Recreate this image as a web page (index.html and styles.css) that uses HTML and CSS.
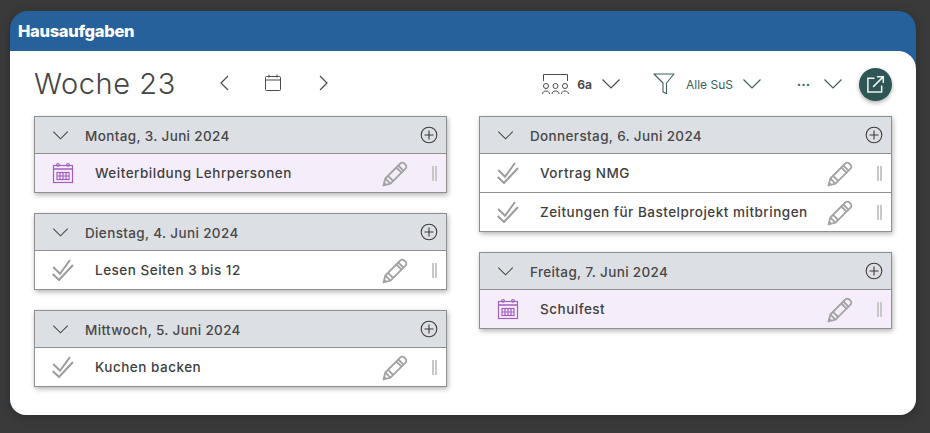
FILE: index.html
```html
<!DOCTYPE html>
<html lang="de">
<head>
<meta charset="utf-8">
<title>Hausaufgaben</title>
<link rel="stylesheet" href="styles.css">
</head>
<body>
<svg class="defs" width="0" height="0" aria-hidden="true">
  <symbol id="chev" viewBox="0 0 20 12"><path d="M1.5 1.5 10 10l8.500-8.500" fill="none" stroke="currentColor" stroke-width="1.200"/></symbol>
  <symbol id="plus" viewBox="0 0 18 18"><circle cx="9" cy="9" r="7.800" fill="none" stroke="currentColor" stroke-width="1.100"/><path d="M9 4.500v9M4.500 9h9" fill="none" stroke="currentColor" stroke-width="1.100"/></symbol>
  <symbol id="pencil" viewBox="0 0 26 26"><g fill="none" stroke="#a3a3a3" stroke-width="1.800" stroke-linejoin="round"><path d="M1.500 24.500l1.800-7L18.300 2.500a2.800 2.800 0 0 1 4 0l1.200 1.200a2.800 2.800 0 0 1 0 4L8.500 22.700z"/><path d="M3.300 17.500l5.200 5.200M6 14.800l5.200 5.200M16.300 4.500l5.200 5.200M14.300 6.500l5.200 5.200"/></g><path d="M1.500 24.500l.9-3.700 2.800 2.800z" fill="#a3a3a3"/></symbol>
  <symbol id="check" viewBox="0 0 24 22"><g fill="none" stroke="#9c9c9c" stroke-width="2"><path d="M.7 15 7 21 21 6"/><path d="M1.200 8l6.800 6.800L18 1"/></g></symbol>
  <symbol id="cal" viewBox="0 0 22 22"><g fill="none" stroke="#a25fc1" stroke-width="1.200"><rect x="1.500" y="3.500" width="19" height="17"/><path d="M1.500 7h19" stroke-width="1.500"/><rect x="5" y="10.500" width="12" height="7"/><path d="M8 10.500v7M11 10.500v7M14 10.500v7M5 14h12"/><circle cx="6" cy="2.800" r="1.300"/><circle cx="16" cy="2.800" r="1.300"/></g></symbol>
</svg>
<main class="panel">
  <header class="title-bar"><h1 class="title">Hausaufgaben</h1></header>
  <div class="content">
    <div class="toolbar">
      <div class="week-nav">
        <h2 class="week">Woche 23</h2>
        <svg class="arrow" viewBox="0 0 12 18" aria-hidden="true"><path d="M10 2 3 9l7 7" fill="none" stroke="#4a4a4a" stroke-width="1.200"/></svg>
        <svg class="today" viewBox="0 0 16 18" aria-hidden="true"><g fill="none" stroke="#4a4a4a" stroke-width="1"><rect x=".5" y="2.500" width="15" height="14" rx="1"/><path d="M.5 6h15" /><path d="M4 .5v3M12 .5v3"/></g></svg>
        <svg class="arrow" viewBox="0 0 12 18" aria-hidden="true"><path d="m2 2 7 7-7 7" fill="none" stroke="#4a4a4a" stroke-width="1.200"/></svg>
      </div>
      <div class="tools">
        <svg class="class-icon" viewBox="0 0 27 22" aria-hidden="true"><g fill="none" stroke="#4a4a4a" stroke-width="1"><path d="M1.500 8V1.500h24V8"/><circle cx="4" cy="13" r="2.500"/><circle cx="13.500" cy="13" r="2.500"/><circle cx="23" cy="13" r="2.500"/><path d="M.5 21c0-4 7-4 7 0M10 21c0-4 7-4 7 0M19.500 21c0-4 7-4 7 0"/></g></svg>
        <span class="class-name">6a</span>
        <svg class="tool-chev dark"><use href="#chev"/></svg>
        <svg class="filter" viewBox="0 0 22 22" aria-hidden="true"><path d="M1 1h20l-7.500 9v10.500l-3.500-1.500v-9z" fill="none" stroke="#3d5f5c" stroke-width="1.100" stroke-linejoin="round"/></svg>
        <span class="filter-name">Alle SuS</span>
        <svg class="tool-chev teal"><use href="#chev"/></svg>
        <span class="dots">&#8226;&#8226;&#8226;</span>
        <svg class="tool-chev teal more"><use href="#chev"/></svg>
        <button class="open" type="button" aria-label="Öffnen">
          <svg viewBox="0 0 20 20" aria-hidden="true"><g fill="none" stroke="#f2f2f2" stroke-width="1.600"><path d="M9 3.500H2v14.500h14.500V11"/><path d="M7.500 12.500 18 2M11.500 1.800h6.700v6.700"/></g></svg>
        </button>
      </div>
    </div>
    <div class="columns">
      <div class="column">
        <section class="day">
          <div class="day-head"><svg class="head-chev"><use href="#chev"/></svg><span class="day-name">Montag, 3. Juni 2024</span><svg class="plus"><use href="#plus"/></svg></div>
          <div class="item event"><svg class="item-icon cal"><use href="#cal"/></svg><span class="item-text">Weiterbildung Lehrpersonen</span><svg class="pencil"><use href="#pencil"/></svg><span class="grip"></span></div>
        </section>
        <section class="day">
          <div class="day-head"><svg class="head-chev"><use href="#chev"/></svg><span class="day-name">Dienstag, 4. Juni 2024</span><svg class="plus"><use href="#plus"/></svg></div>
          <div class="item"><svg class="item-icon"><use href="#check"/></svg><span class="item-text">Lesen Seiten 3 bis 12</span><svg class="pencil"><use href="#pencil"/></svg><span class="grip"></span></div>
        </section>
        <section class="day">
          <div class="day-head"><svg class="head-chev"><use href="#chev"/></svg><span class="day-name">Mittwoch, 5. Juni 2024</span><svg class="plus"><use href="#plus"/></svg></div>
          <div class="item"><svg class="item-icon"><use href="#check"/></svg><span class="item-text">Kuchen backen</span><svg class="pencil"><use href="#pencil"/></svg><span class="grip"></span></div>
        </section>
      </div>
      <div class="column">
        <section class="day">
          <div class="day-head"><svg class="head-chev"><use href="#chev"/></svg><span class="day-name">Donnerstag, 6. Juni 2024</span><svg class="plus"><use href="#plus"/></svg></div>
          <div class="item"><svg class="item-icon"><use href="#check"/></svg><span class="item-text">Vortrag NMG</span><svg class="pencil"><use href="#pencil"/></svg><span class="grip"></span></div>
          <div class="item"><svg class="item-icon"><use href="#check"/></svg><span class="item-text">Zeitungen für Bastelprojekt mitbringen</span><svg class="pencil"><use href="#pencil"/></svg><span class="grip"></span></div>
        </section>
        <section class="day">
          <div class="day-head"><svg class="head-chev"><use href="#chev"/></svg><span class="day-name">Freitag, 7. Juni 2024</span><svg class="plus"><use href="#plus"/></svg></div>
          <div class="item event"><svg class="item-icon cal"><use href="#cal"/></svg><span class="item-text">Schulfest</span><svg class="pencil"><use href="#pencil"/></svg><span class="grip"></span></div>
        </section>
      </div>
    </div>
  </div>
</main>
</body>
</html>
```
FILE: styles.css
```css
* { box-sizing: border-box; }
html, body { margin: 0; height: 100%; }
body {
  background: #3a3a3a;
  padding: 11px 14px 18px 10px;
  font-family: Inter, "Liberation Sans", sans-serif;
  overflow: hidden;
}
.defs { position: absolute; }
.panel {
  height: 404px;
  background: #26619c;
  border-radius: 18px 18px 16px 16px;
  box-shadow: 0 2px 10px rgba(0,0,0,.25);
  display: flex;
  flex-direction: column;
  overflow: hidden;
}
.title-bar { height: 40px; flex: none; display: flex; align-items: center; padding-left: 8px; }
.title { margin: 0; font-size: 16.500px; font-weight: 800; color: #fff; letter-spacing: -.3px; }
.content {
  flex: 1;
  background: #fff;
  border-radius: 0 18px 0 0;
  padding: 0 24px;
}
.toolbar { height: 65px; display: flex; justify-content: space-between; align-items: flex-start; }
.week-nav { display: flex; align-items: center; height: 65px; padding-bottom: 1px; }
.week { margin: 0; font-size: 29px; font-weight: 300; color: #444; width: 142px; letter-spacing: .55px; line-height: 1; }
.arrow { width: 12px; height: 18px; }
.today { width: 16px; height: 18px; margin: 0 37px 0 35px; }
.week-nav .arrow:nth-of-type(1) { margin-left: 42px; }
.tools { display: flex; align-items: center; height: 65px; padding-top: 1px; }
.class-icon { width: 27px; height: 22px; }
.class-name { font-size: 12px; font-weight: 700; color: #4a4a4a; margin-left: 8px; }
.tool-chev { width: 20px; height: 12px; }
.tool-chev.dark { color: #4a4a4a; margin-left: 9px; }
.tool-chev.teal { color: #3d5f5c; }
.filter { width: 22px; height: 22px; margin-left: 32px; }
.filter-name { font-size: 12px; color: #3d5f5c; margin-left: 11px; margin-right: 9px; }
.dots { font-size: 7px; color: #3d5f5c; margin-left: 35px; letter-spacing: .5px; width: 14px; }
.more { margin-left: 12px; }
.open {
  width: 33px; height: 33px; margin-left: 16px; padding: 0;
  border: 0; border-radius: 50%;
  background: #2d5654;
  box-shadow: 0 2px 4px rgba(0,0,0,.3);
  display: flex; align-items: center; justify-content: center;
}
.open svg { width: 19px; height: 19px; }
.columns { display: grid; grid-template-columns: 413px 413px; column-gap: 32px; }
.column { display: flex; flex-direction: column; gap: 20px; }
.day {
  border: 1px solid #8f8f8f;
  background: #fff;
  box-shadow: 1px 2px 5px rgba(0,0,0,.3);
}
.day-head {
  height: 36px;
  background: #dcdfe3;
  display: flex; align-items: center;
  padding: 0 8px 0 17px;
  color: #444;
}
.head-chev { width: 17px; height: 11px; }
.day-name { font-size: 13.500px; font-weight: 500; color: #484848; margin-left: 16px; padding-top: 2px; flex: 1; letter-spacing: .36px; }
.plus { width: 18px; height: 18px; color: #3c3c3c; }
.item {
  height: 39px;
  border-top: 1px solid #8f8f8f;
  display: flex; align-items: center;
  padding: 0 9px 0 17px;
}
.event { background: #f5eefa; }
.item-icon { width: 24px; height: 22px; flex: none; }
.cal { width: 22px; height: 22px; margin-right: 2px; }
.item-text { font-size: 13.500px; font-weight: 500; color: #3f3f3f; margin-left: 19px; flex: 1; letter-spacing: .5px; }
.pencil { width: 26px; height: 26px; flex: none; margin-top: 2px; }
.grip {
  width: 5px; height: 15px; margin-left: 24px; flex: none;
  border-left: 2px solid #c8c8c8;
  border-right: 2px solid #c8c8c8;
}
```
